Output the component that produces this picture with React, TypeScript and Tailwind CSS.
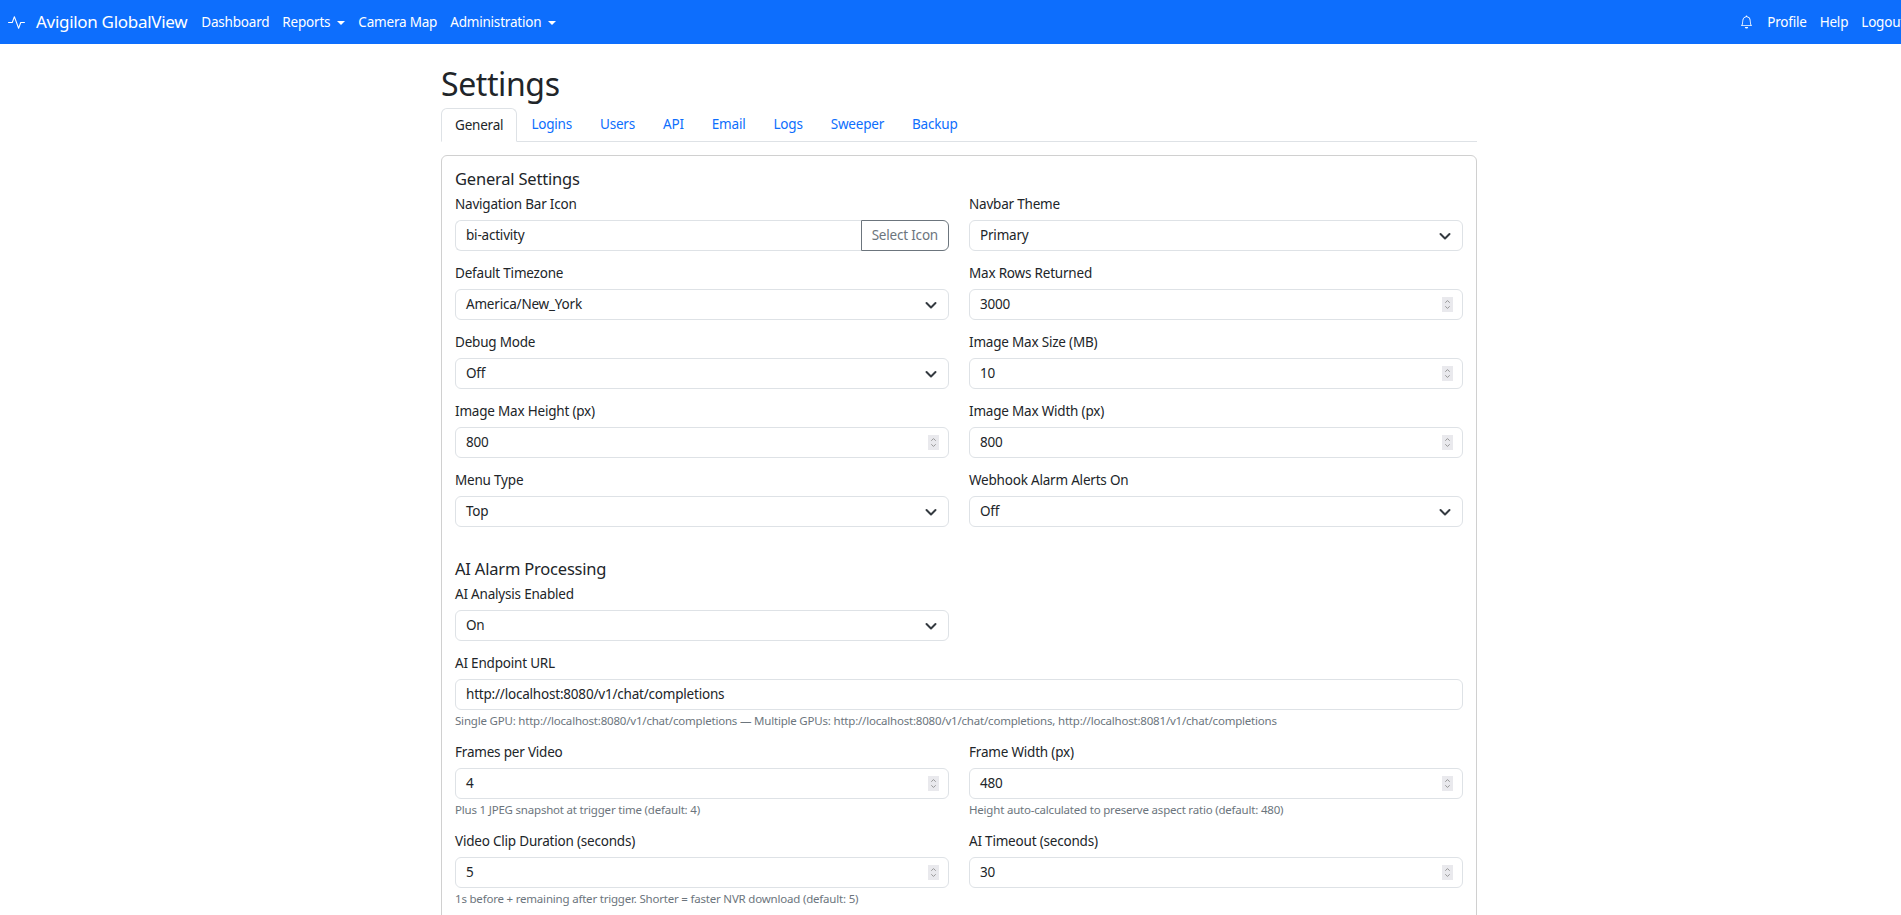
import { BsActivity, BsBell } from 'react-icons/bs';

const font = "font-['Noto_Sans','Open_Sans',sans-serif]";

function Chevron() {
  return (
    <svg viewBox="0 0 16 16" className="ml-auto w-4 h-4 shrink-0 -mr-[1px]" fill="none" stroke="#343a40" strokeWidth="2" strokeLinecap="round" strokeLinejoin="round">
      <path d="m3.5 6 4.5 4.5 4.5-4.5" />
    </svg>
  );
}

function Spinner() {
  return (
    <span className="ml-auto w-[11px] h-[15px] shrink-0 bg-[#e9e9ed] flex flex-col items-center justify-center -mr-[1px]">
      <svg viewBox="0 0 8 12" className="w-[7px] h-[11px]" fill="none" stroke="#8a8a8a" strokeWidth="1">
        <path d="M1.5 4 4 1.5 6.5 4M1.5 8 4 10.5 6.5 8" />
      </svg>
    </span>
  );
}

function Label({ children }: { children: string }) {
  return <div className="h-[21px] mb-[5px] text-[13.5px] leading-[21px] text-[#212529] tracking-[-0.2px]">{children}</div>;
}

function Control({ value, kind }: { value: string; kind?: 'select' | 'number' }) {
  return (
    <div className="flex items-center h-[31px] px-[10px] border border-[#dee2e6] rounded-md text-[13.5px] text-[#212529] tracking-[-0.2px] bg-white">
      <span>{value}</span>
      {kind === 'select' && <Chevron />}
      {kind === 'number' && <Spinner />}
    </div>
  );
}

function Help({ children }: { children: string }) {
  return <div className="h-[18px] mt-[2px] text-[11.5px] leading-[18px] text-[#6c757d] tracking-[-0.2px]">{children}</div>;
}

function Field({ label, value, kind, help }: { label: string; value: string; kind?: 'select' | 'number'; help?: string }) {
  return (
    <div>
      <Label>{label}</Label>
      <Control value={value} kind={kind} />
      {help && <Help>{help}</Help>}
    </div>
  );
}

const tabs = ['Logins', 'Users', 'API', 'Email', 'Logs', 'Sweeper', 'Backup'];

export default function App() {
  return (
    <div className={`h-screen overflow-hidden bg-white ${font}`}>
      {/* Navbar */}
      <nav className="h-[44px] bg-[#0d6efd] flex items-center text-white text-[13.5px] tracking-[-0.2px] pl-[8px] overflow-hidden">
        <BsActivity className="w-[17px] h-[17px] mr-[11px]" />
        <span className="text-[17px] mr-[14px] tracking-[-0.3px]">Avigilon GlobalView</span>
        <a className="mr-[13px]">Dashboard</a>
        <a className="mr-[13px] flex items-center">
          Reports
          <span className="ml-[7px] mt-[1px] border-x-[4px] border-x-transparent border-t-[4px] border-t-white" />
        </a>
        <a className="mr-[13px]">Camera Map</a>
        <a className="flex items-center">
          Administration
          <span className="ml-[7px] mt-[1px] border-x-[4px] border-x-transparent border-t-[4px] border-t-white" />
        </a>
        <div className="ml-auto flex items-center gap-[13px] -mr-[4px]">
          <BsBell className="w-[13px] h-[14px] mr-[1px]" />
          <a>Profile</a>
          <a>Help</a>
          <a>Logout</a>
        </div>
      </nav>

      <main className="w-[1036px] ml-[441px] text-[#212529]">
        <h1 className="text-[32px] leading-[40px] mt-[20px] tracking-[-0.4px]">Settings</h1>

        {/* Tabs */}
        <div className="flex h-[34px] mt-[4px] border-b border-[#dee2e6] text-[13.5px] tracking-[-0.2px]">
          <a className="h-[34px] px-[13px] border border-[#dee2e6] border-b-white rounded-t-md flex items-center text-[#212529] bg-white">General</a>
          {tabs.map((t) => (
            <a key={t} className="h-[33px] px-[14px] flex items-center text-[#0d6efd]">{t}</a>
          ))}
        </div>

        {/* Card */}
        <div className="mt-[13px] border border-[#d0d0d0] rounded-md px-[13px] pt-[13px] pb-6">
          <h5 className="text-[16.5px] leading-[20px] mb-[5px] tracking-[-0.2px]">General Settings</h5>
          <div className="grid grid-cols-2 gap-x-[20px] gap-y-[12px]">
            <div>
              <Label>Navigation Bar Icon</Label>
              <div className="flex h-[31px] text-[13.5px] tracking-[-0.2px]">
                <div className="flex-1 flex items-center px-[10px] border border-[#dee2e6] border-r-0 rounded-l-md">bi-activity</div>
                <div className="flex items-center px-[10px] border border-[#6c757d] rounded-r-md text-[#6c757d]">Select Icon</div>
              </div>
            </div>
            <Field label="Navbar Theme" value="Primary" kind="select" />
            <Field label="Default Timezone" value="America/New_York" kind="select" />
            <Field label="Max Rows Returned" value="3000" kind="number" />
            <Field label="Debug Mode" value="Off" kind="select" />
            <Field label="Image Max Size (MB)" value="10" kind="number" />
            <Field label="Image Max Height (px)" value="800" kind="number" />
            <Field label="Image Max Width (px)" value="800" kind="number" />
            <Field label="Menu Type" value="Top" kind="select" />
            <Field label="Webhook Alarm Alerts On" value="Off" kind="select" />
          </div>

          <h5 className="text-[16.5px] leading-[20px] mt-[32px] mb-[5px] tracking-[-0.2px]">AI Alarm Processing</h5>
          <div className="grid grid-cols-2 gap-x-[20px]">
            <Field label="AI Analysis Enabled" value="On" kind="select" />
          </div>
          <div className="mt-[12px]">
            <Field
              label="AI Endpoint URL"
              value="http://localhost:8080/v1/chat/completions"
              help="Single GPU: http://localhost:8080/v1/chat/completions — Multiple GPUs: http://localhost:8080/v1/chat/completions, http://localhost:8081/v1/chat/completions"
            />
          </div>
          <div className="grid grid-cols-2 gap-x-[20px] gap-y-[12px] mt-[12px]">
            <Field label="Frames per Video" value="4" kind="number" help="Plus 1 JPEG snapshot at trigger time (default: 4)" />
            <Field label="Frame Width (px)" value="480" kind="number" help="Height auto-calculated to preserve aspect ratio (default: 480)" />
            <Field label="Video Clip Duration (seconds)" value="5" kind="number" help="1s before + remaining after trigger. Shorter = faster NVR download (default: 5)" />
            <Field label="AI Timeout (seconds)" value="30" kind="number" />
          </div>
        </div>
      </main>
    </div>
  );
}
